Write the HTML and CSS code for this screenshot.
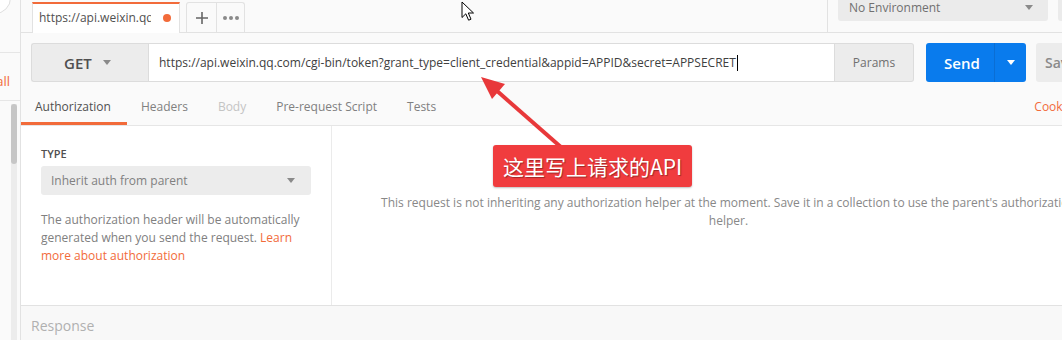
FILE: index.html
```html
<!DOCTYPE html>
<html>
<head>
    <title>Postman - Authorization</title>
    <link rel="stylesheet" href="styles.css">
</head>
<body>
    <div class="app">
        <div class="sidebar">
            <div class="sidebar-top"><div class="search-end"></div></div>
            <div class="sidebar-link">View all</div>
            <div class="scroll-track"><div class="scroll-thumb"></div></div>
        </div>

        <div class="main">
            <div class="tab-bar">
                <div class="req-tab">
                    <span class="req-tab-name">https://api.weixin.qq.com/cgi-bin/token</span>
                    <span class="unsaved-dot"></span>
                </div>
                <div class="tab-actions">
                    <div class="tab-btn">
                        <svg width="12" height="12" viewBox="0 0 12 12"><path d="M6 0V12M0 6H12" stroke="#666" stroke-width="1.6"/></svg>
                    </div>
                    <div class="tab-btn tab-btn-more">
                        <span class="dot"></span><span class="dot"></span><span class="dot"></span>
                    </div>
                </div>
                <div class="tab-bar-right">
                    <div class="env-select">
                        <span>No Environment</span>
                        <span class="caret"></span>
                    </div>
                    <div class="env-eye"></div>
                </div>
            </div>

            <div class="request-bar">
                <div class="method">GET <span class="caret"></span></div>
                <div class="url">https://api.weixin.qq.com/cgi-bin/token?grant_type=client_credential&amp;appid=APPID&amp;secret=APPSECRET<span class="text-caret"></span></div>
                <div class="params">Params</div>
                <div class="send">
                    <span class="send-label">Send</span>
                    <span class="send-more"><span class="caret caret-white"></span></span>
                </div>
                <div class="save">Save</div>
            </div>

            <div class="req-tabs">
                <div class="req-tab-item active">Authorization</div>
                <div class="req-tab-item">Headers</div>
                <div class="req-tab-item disabled">Body</div>
                <div class="req-tab-item">Pre-request Script</div>
                <div class="req-tab-item">Tests</div>
                <div class="req-tab-item link push">Cookies</div>
                <div class="req-tab-item link">Code</div>
            </div>

            <div class="auth-body">
                <div class="auth-left">
                    <div class="type-label">Type</div>
                    <div class="auth-select">
                        <span>Inherit auth from parent</span>
                        <span class="caret"></span>
                    </div>
                    <p class="auth-help">The authorization header will be automatically generated when you send the request. <a href="#">Learn more about authorization</a></p>
                </div>
                <div class="auth-right">
                    This request is not inheriting any authorization helper at the moment. Save it in a collection to use the parent's authorization helper.
                </div>
            </div>

            <div class="response">Response</div>
        </div>
    </div>

    <!-- annotation on top of the screenshot -->
    <svg class="annot-arrow" width="1062" height="340" viewBox="0 0 1062 340">
        <line x1="496" y1="90" x2="562" y2="148" stroke="#e8383a" stroke-width="4"/>
        <polygon points="481,77 492,99 505,84" fill="#e8383a"/>
    </svg>
    <div class="callout">这里写上请求的API</div>

    <svg class="cursor" width="14" height="21" viewBox="0 0 14 21">
        <path d="M1 1V16.5L4.8 12.8L7.6 19.2L10 18.2L7.3 12H12.5Z" fill="#fff" stroke="#000" stroke-width="1" stroke-linejoin="round"/>
    </svg>
</body>
</html>
```

FILE: styles.css
```css
body {
    margin: 0;
    width: 1062px;
    height: 340px;
    overflow: hidden;
    position: relative;
    font-family: "Open Sans", "Noto Sans", sans-serif;
    background: #fff;
}
.app {
    display: flex;
    height: 340px;
}

/* sidebar */
.sidebar {
    width: 20px;
    flex: none;
    display: flex;
    flex-direction: column;
    border-right: 1px solid #e2e2e2;
    background: #fafafa;
    overflow: hidden;
}
.sidebar-top {
    height: 52px;
    border-bottom: 1px solid #e6e6e6;
    overflow: hidden;
}
.search-end {
    width: 40px;
    height: 30px;
    margin: -18px 0 0 -31px;
    border: 1px solid #dedede;
    border-radius: 16px;
    background: #fff;
}
.sidebar-link {
    height: 48px;
    box-sizing: border-box;
    display: flex;
    align-items: center;
    justify-content: flex-end;
    padding: 8px 10px 0 0;
    border-bottom: 1px solid #e6e6e6;
    color: #f26b3a;
    font-size: 13px;
    white-space: nowrap;
    overflow: hidden;
}
.scroll-track {
    flex: 1;
    width: 6px;
    margin: 3px 0 0 11px;
    background: #ececec;
}
.scroll-thumb {
    height: 60px;
    border-radius: 3px;
    background: #c6c6c6;
}

/* main */
.main {
    width: 1104px;
    flex: none;
    display: flex;
    flex-direction: column;
    background: #fafafa;
}
.tab-bar {
    height: 33px;
    box-sizing: border-box;
    display: flex;
    align-items: flex-end;
    padding-left: 11px;
    border-bottom: 1px solid #e2e2e2;
}
.req-tab {
    width: 148px;
    height: 31px;
    box-sizing: border-box;
    margin-bottom: -1px;
    display: flex;
    align-items: center;
    padding: 0 8px 2px 6px;
    border-top: 2px solid #f26b3a;
    border-left: 1px solid #e2e2e2;
    border-right: 1px solid #e2e2e2;
    background: #fff;
    font-size: 12px;
    color: #505050;
}
.req-tab-name {
    flex: 1;
    overflow: hidden;
    white-space: nowrap;
}
.unsaved-dot {
    width: 8px;
    height: 8px;
    margin-left: 12px;
    border-radius: 50%;
    background: #f26b3a;
}
.tab-actions {
    display: flex;
    margin-left: 6px;
    height: 29px;
    border: 1px solid #e2e2e2;
    border-bottom: none;
    border-radius: 3px 3px 0 0;
    background: #fafafa;
}
.tab-btn {
    width: 29px;
    display: flex;
    align-items: center;
    justify-content: center;
}
.tab-btn-more {
    width: 27px;
    gap: 2px;
    border-left: 1px solid #e2e2e2;
}
.dot {
    width: 4px;
    height: 4px;
    border-radius: 50%;
    background: #8a8a8a;
}
.tab-bar-right {
    margin-left: auto;
    align-self: stretch;
    display: flex;
    gap: 10px;
    padding: 0 11px 0 10px;
    border-left: 1px solid #e2e2e2;
}
.env-select {
    width: 210px;
    height: 28px;
    box-sizing: border-box;
    margin-top: -7px;
    display: flex;
    align-items: center;
    justify-content: space-between;
    padding: 0 15px 0 11px;
    border-radius: 0 0 3px 3px;
    background: #ebebeb;
    font-size: 12px;
    color: #707070;
}
.env-eye {
    width: 56px;
    height: 28px;
    margin-top: -7px;
    border-radius: 0 0 3px 3px;
    background: #ebebeb;
}
.caret {
    width: 0;
    height: 0;
    border-left: 4px solid transparent;
    border-right: 4px solid transparent;
    border-top: 5px solid #8a8a8a;
}
.caret-white {
    border-top-color: #fff;
}

/* request bar */
.request-bar {
    display: flex;
    height: 39px;
    padding: 10px 10px 0;
}
.method {
    width: 117px;
    box-sizing: border-box;
    display: flex;
    align-items: center;
    padding-left: 32px;
    border: 1px solid #dcdcdc;
    border-right: none;
    border-radius: 3px 0 0 3px;
    background: #ececec;
    font-size: 15px;
    font-weight: 600;
    color: #505050;
}
.method .caret {
    margin-left: 11px;
}
.url {
    flex: 1;
    display: flex;
    align-items: center;
    padding-left: 10px;
    border: 1px solid #dcdcdc;
    background: #fff;
    font-size: 12px;
    color: #404040;
    white-space: nowrap;
}
.text-caret {
    width: 1px;
    height: 16px;
    margin-left: 1px;
    background: #000;
}
.params {
    width: 79px;
    box-sizing: border-box;
    display: flex;
    align-items: center;
    justify-content: center;
    border: 1px solid #dcdcdc;
    border-left: none;
    border-radius: 0 3px 3px 0;
    background: #ececec;
    font-size: 12px;
    color: #707070;
}
.send {
    width: 100px;
    margin-left: 12px;
    display: flex;
    border-radius: 3px;
    background: #097bed;
    color: #fff;
}
.send-label {
    width: 69px;
    box-sizing: border-box;
    display: flex;
    align-items: center;
    padding-left: 18px;
    border-right: 1px solid #0a6ed4;
    font-size: 15px;
    font-weight: 600;
}
.send-more {
    flex: 1;
    display: flex;
    align-items: center;
    justify-content: center;
}
.save {
    width: 79px;
    margin-left: 10px;
    display: flex;
    align-items: center;
    padding-left: 9px;
    box-sizing: border-box;
    border-radius: 3px;
    background: #ececec;
    font-size: 14px;
    font-weight: 600;
    color: #8a8a8a;
}

/* request tabs */
.req-tabs {
    height: 44px;
    box-sizing: border-box;
    display: flex;
    border-bottom: 1px solid #e6e6e6;
}
.req-tab-item {
    display: flex;
    align-items: center;
    padding: 8px 16px 0 14px;
    border-bottom: 3px solid transparent;
    font-size: 12px;
    color: #808080;
}
.req-tab-item.active {
    color: #505050;
    border-bottom-color: #f26b3a;
}
.req-tab-item.disabled {
    color: #c4c4c4;
}
.req-tab-item.link {
    padding: 8px 6px 0;
    color: #f26b3a;
}
.req-tab-item.push {
    margin-left: auto;
}

/* auth panel */
.auth-body {
    height: 179px;
    display: flex;
    background: #fff;
}
.auth-left {
    width: 311px;
    box-sizing: border-box;
    padding: 21px 20px 0;
    border-right: 1px solid #ebebeb;
}
.type-label {
    font-size: 11px;
    font-weight: 600;
    line-height: 14px;
    text-transform: uppercase;
    color: #505050;
}
.auth-select {
    height: 29px;
    margin-top: 5px;
    display: flex;
    align-items: center;
    justify-content: space-between;
    padding: 0 16px 0 10px;
    border-radius: 3px;
    background: #ececec;
    font-size: 12px;
    color: #808080;
}
.auth-help {
    margin: 16px 0 0;
    font-size: 12px;
    line-height: 18px;
    color: #808080;
}
.auth-help a {
    color: #f26b3a;
    text-decoration: none;
}
.auth-right {
    flex: 1;
    padding: 68px 30px 0;
    text-align: center;
    font-size: 12px;
    line-height: 18px;
    color: #888;
}

.response {
    flex: 1;
    padding: 10px 0 0 10px;
    border-top: 1px solid #e2e2e2;
    background: #f8f8f8;
    font-size: 14px;
    line-height: 20px;
    color: #b0b0b0;
}

/* annotation */
.annot-arrow {
    position: absolute;
    left: 0;
    top: 0;
    pointer-events: none;
}
.callout {
    position: absolute;
    left: 493px;
    top: 145px;
    width: 199px;
    height: 42px;
    box-sizing: border-box;
    display: flex;
    align-items: center;
    padding-left: 10px;
    border-radius: 3px;
    background: #f03c3e;
    box-shadow: 0 1px 2px rgba(0,0,0,0.25);
    color: #fff;
    font-family: "Noto Sans CJK SC", "Noto Sans", sans-serif;
    font-size: 21px;
    text-shadow: 1px 1px 1px rgba(0,0,0,0.35);
    white-space: nowrap;
}
.cursor {
    position: absolute;
    left: 461px;
    top: 1px;
}
```
